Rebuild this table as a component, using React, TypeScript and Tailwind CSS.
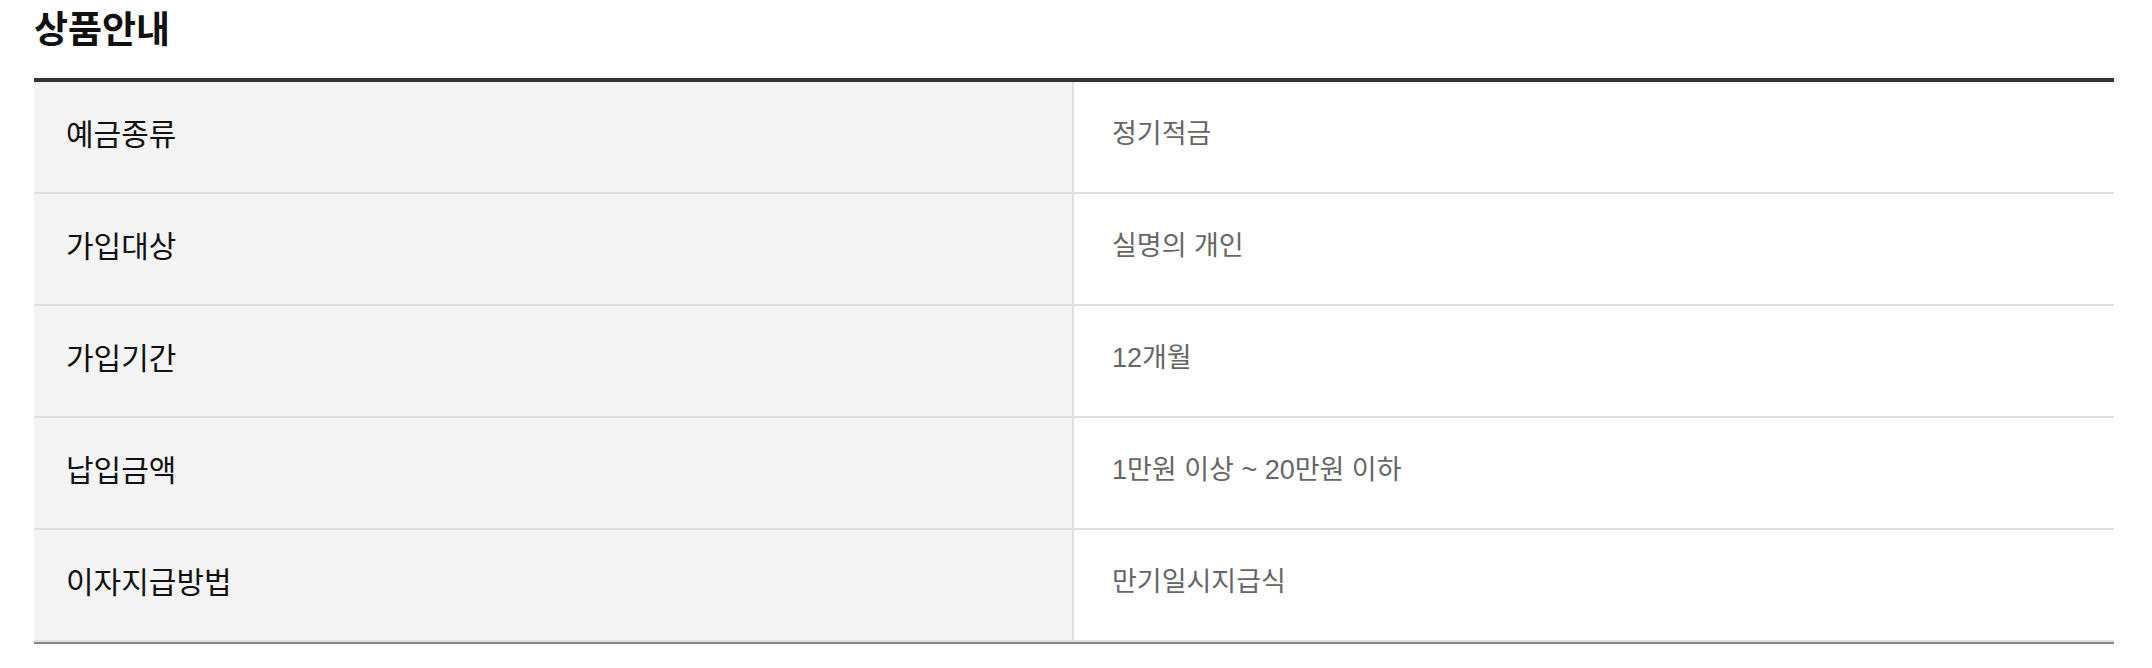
const rows: { label: string; value: string }[] = [
  { label: "예금종류", value: "정기적금" },
  { label: "가입대상", value: "실명의 개인" },
  { label: "가입기간", value: "12개월" },
  { label: "납입금액", value: "1만원 이상 ~ 20만원 이하" },
  { label: "이자지급방법", value: "만기일시지급식" },
];

export default function App() {
  return (
    <div className="bg-white pl-[34px] pr-[38px] pb-[24px] font-['Liberation_Sans','Noto_Sans_CJK_KR',sans-serif]">
      <h2 className="text-[37px] leading-[62px] font-bold text-[#111] mb-[16px]">상품안내</h2>

      <div className="border-t-4 border-b-2 border-t-[#333] border-b-[#888]">
        {rows.map((row) => (
          <div key={row.label} className="grid grid-cols-2 h-[112px] border-b-2 border-[#e0e0e0]">
            <div className="flex items-center pl-8 pb-[5px] bg-[#f4f4f4] border-r-2 border-[#e0e0e0] text-[30px] text-[#111]">
              {row.label}
            </div>
            <div className="flex items-center pl-[38px] pb-[5px] text-[27px] text-[#666]">{row.value}</div>
          </div>
        ))}
      </div>
    </div>
  );
}
